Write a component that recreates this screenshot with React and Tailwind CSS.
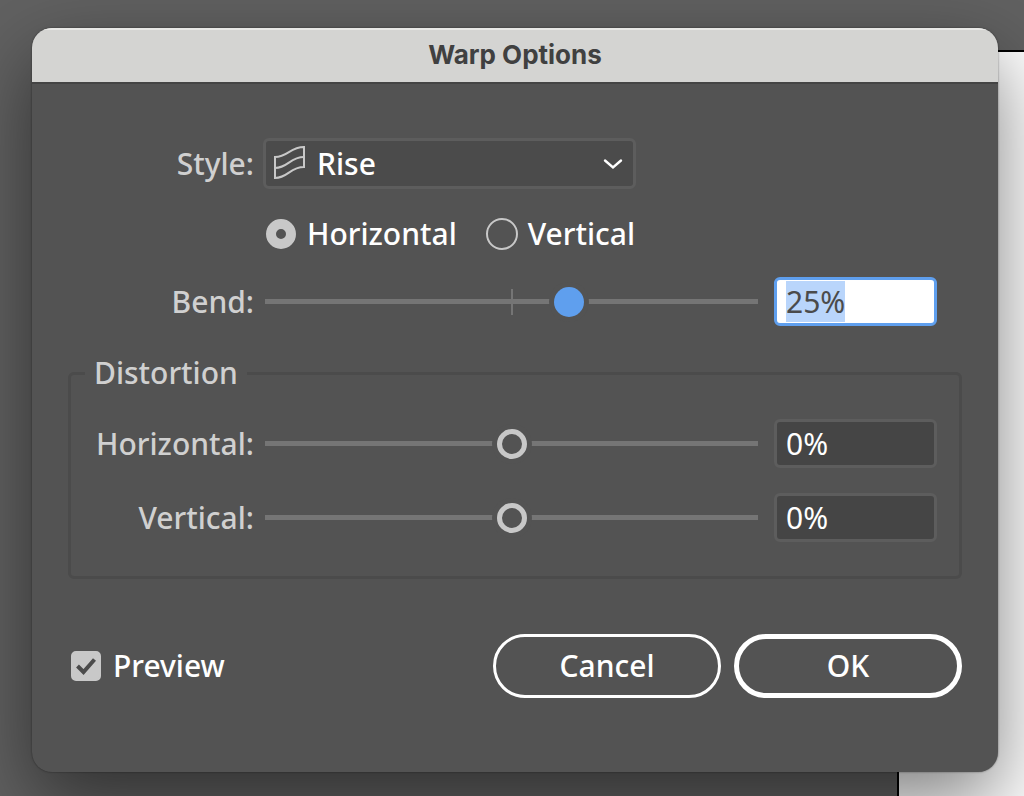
import { useEffect, useRef, useState } from "react"

const Slider = ({ label, value, onChange, active }) => {
    return (
        <div className="grid flex-1 items-center">
            {active && <span className="col-start-1 row-start-1 h-[26px] w-[2px] justify-self-center bg-[#757575]" />}
            <input
                type="range"
                min="-100"
                max="100"
                aria-label={label}
                value={value}
                onChange={e => onChange(Number(e.target.value))}
                className={`col-start-1 row-start-1 h-[30px] w-full min-w-0 appearance-none bg-transparent outline-none
                    [&::-webkit-slider-runnable-track]:h-[5px] [&::-webkit-slider-runnable-track]:bg-[#757575]
                    [&::-webkit-slider-thumb]:-mt-[12px] [&::-webkit-slider-thumb]:size-[30px] [&::-webkit-slider-thumb]:appearance-none
                    [&::-webkit-slider-thumb]:rounded-full [&::-webkit-slider-thumb]:shadow-[0_0_0_5px_#535353]
                    ${active
                        ? "[&::-webkit-slider-thumb]:bg-[#5f9fee]"
                        : "[&::-webkit-slider-thumb]:border-[5px] [&::-webkit-slider-thumb]:border-[#c8c8c8] [&::-webkit-slider-thumb]:bg-[#535353]"}`}
            />
        </div>
    )
}

const SliderRow = ({ id, label, value, onChange, active, inputRef }) => {
    return (
        <div className="flex items-center">
            <label htmlFor={id} className="mr-[11px] w-[161px] shrink-0 text-right font-medium text-[#d0d0d0]">
                {label}:
            </label>
            <Slider label={label} value={value} onChange={onChange} active={active} />
            <input
                id={id}
                ref={inputRef}
                type="text"
                value={`${value}%`}
                onChange={e => onChange(parseInt(e.target.value) || 0)}
                className={`ml-4 h-[49px] w-[163px] rounded-md border-[3px] px-[9px] leading-9 outline-none
                    selection:bg-[#b9d5fb] selection:text-[#4b4b4b]
                    ${active
                        ? "border-[#5f9fee] bg-white text-[#4b4b4b]"
                        : "border-[#5d5d5d] bg-[#454545] text-white"}`}
            />
        </div>
    )
}

const AxisRadio = ({ label, checked, onChange }) => {
    return (
        <label className="flex items-center gap-[10px] font-medium text-white">
            <input
                type="radio"
                name="axis"
                checked={checked}
                onChange={onChange}
                className="size-8 appearance-none rounded-full border-2 border-[#c8c8c8] checked:m-px checked:size-[30px] checked:border-[10px]"
            />
            {label}
        </label>
    )
}

const App = () => {
    const [style, setStyle] = useState("Rise");
    const [axis, setAxis] = useState("Horizontal");
    const [bend, setBend] = useState(25);
    const [horizontal, setHorizontal] = useState(0);
    const [vertical, setVertical] = useState(0);
    const [preview, setPreview] = useState(true);
    const bendRef = useRef(null);

    useEffect(() => {
        bendRef.current.focus();
        bendRef.current.select();
    }, []);

    return (
        <div className="grid min-h-screen overflow-hidden bg-[#616161] font-['Noto_Sans',sans-serif] text-[30px] leading-9">
            {/* artboard behind the dialog */}
            <div className="col-start-1 row-start-1 flex justify-end pt-[50px]">
                <div className="w-[127px] border-t-2 border-l-2 border-black bg-white" />
            </div>

            <div
                role="dialog"
                aria-labelledby="title"
                className="col-start-1 row-start-1 mt-7 mr-[26px] mb-6 ml-8 self-start overflow-hidden rounded-[20px] bg-[#535353] shadow-[0_0_2px_rgba(0,0,0,0.5),0_30px_80px_rgba(0,0,0,0.5)]"
            >
                <header className="h-14 border-b-2 border-[#444444] bg-[#d4d4d2] shadow-[inset_0_2px_0_#e8e8e6]">
                    <h1 id="title" className="pt-[9px] text-center font-['Inter',sans-serif] text-[26px] font-bold text-[#404040]">
                        Warp Options
                    </h1>
                </header>

                <form className="px-9 pt-[54px] pb-[74px]" onSubmit={e => e.preventDefault()}>
                    <div className="px-[25px]">
                        <div className="flex items-center">
                            <label htmlFor="style" className="mr-[9px] w-[161px] text-right font-medium text-[#d0d0d0]">Style:</label>
                            <div className="grid w-[373px] items-center">
                                <select
                                    id="style"
                                    value={style}
                                    onChange={e => setStyle(e.target.value)}
                                    className="col-start-1 row-start-1 h-[51px] appearance-none rounded-md border-[3px] border-[#5d5d5d] bg-[#4b4b4b] pl-[51px] font-medium text-white outline-none"
                                >
                                    <option>Rise</option>
                                </select>
                                <svg viewBox="0 0 32 34" fill="none" stroke="#c8c8c8" strokeWidth="2" className="pointer-events-none col-start-1 row-start-1 mb-1 ml-[10px] h-[34px] w-8">
                                    <path d="M2 12C15 12 17 2 31 2V22C17 22 15 33 2 33Z" />
                                    <path d="M2 23C15 23 17 12 31 12" />
                                </svg>
                                <svg viewBox="0 0 20 12" fill="none" stroke="#ffffff" strokeWidth="2.4" strokeLinecap="round" className="pointer-events-none col-start-1 row-start-1 mr-[13px] h-3 w-5 justify-self-end">
                                    <path d="M2 2.5L10 9.5L18 2.5" />
                                </svg>
                            </div>
                        </div>

                        <div className="mt-[27px] mb-[25px] ml-[172px] flex gap-[29px]">
                            <AxisRadio label="Horizontal" checked={axis === "Horizontal"} onChange={() => setAxis("Horizontal")} />
                            <AxisRadio label="Vertical" checked={axis === "Vertical"} onChange={() => setAxis("Vertical")} />
                        </div>

                        <SliderRow id="bend" label="Bend" value={bend} onChange={setBend} inputRef={bendRef} active />
                    </div>

                    <fieldset className="mt-[29px] rounded-md border-[3px] border-[#4b4b4b] px-[22px] pt-7 pb-[34px]">
                        <legend className="-ml-2 px-[9px] font-medium text-[#d0d0d0]">Distortion</legend>
                        <div className="flex flex-col gap-[25px]">
                            <SliderRow id="horizontal" label="Horizontal" value={horizontal} onChange={setHorizontal} />
                            <SliderRow id="vertical" label="Vertical" value={vertical} onChange={setVertical} />
                        </div>
                    </fieldset>

                    <div className="mt-[55px] flex items-center gap-[13px]">
                        <label className="mr-auto flex items-center gap-3 pl-[3px] font-medium text-white">
                            <span className="grid">
                                <input
                                    type="checkbox"
                                    checked={preview}
                                    onChange={e => setPreview(e.target.checked)}
                                    className="col-start-1 row-start-1 size-[30px] appearance-none rounded-[5px] border-2 border-[#c8c8c8] checked:bg-[#c8c8c8]"
                                />
                                {preview && (
                                    <svg viewBox="0 0 30 30" fill="none" stroke="#4b4b4b" strokeWidth="4" className="pointer-events-none col-start-1 row-start-1 size-[30px]">
                                        <path d="M6.5 15L12.5 21L23.5 8.5" />
                                    </svg>
                                )}
                            </span>
                            Preview
                        </label>
                        <button type="button" className="h-16 w-[228px] rounded-full border-[3px] border-white font-medium text-white">
                            Cancel
                        </button>
                        <button type="submit" className="h-16 w-[228px] rounded-full border-[5px] border-white font-medium text-white">
                            OK
                        </button>
                    </div>
                </form>
            </div>
        </div>
    )
}

export default App
